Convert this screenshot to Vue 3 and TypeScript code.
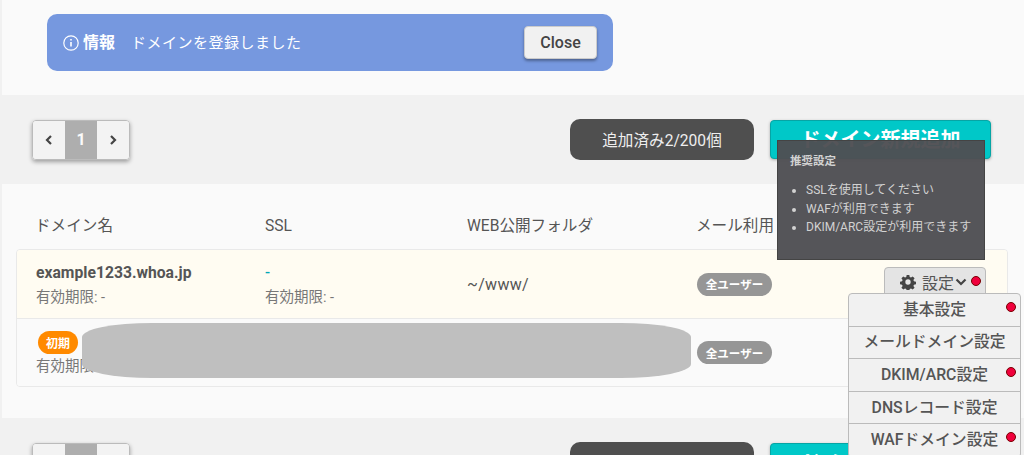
<script setup lang="ts">
interface Row {
  name?: string
  badge?: string
  sslMark?: string
  expiry: string
  sslExpiry?: string
  folder?: string
  highlight: boolean
}

const rows: Row[] = [
  { name: 'example1233.whoa.jp', sslMark: '-', expiry: '有効期限: -', sslExpiry: '有効期限: -', folder: '~/www/', highlight: true },
  { badge: '初期', expiry: '有効期限: -', highlight: false },
]

const menu = [
  { label: '基本設定', dot: true },
  { label: 'メールドメイン設定', dot: false },
  { label: 'DKIM/ARC設定', dot: true },
  { label: 'DNSレコード設定', dot: false },
  { label: 'WAFドメイン設定', dot: true },
]

const tips = ['SSLを使用してください', 'WAFが利用できます', 'DKIM/ARC設定が利用できます']
</script>

<template>
  <div class="page">
    <section class="panel top">
      <div class="alert">
        <svg class="info" width="18" height="18" viewBox="0 0 18 18" fill="none" stroke="#fff">
          <circle cx="9" cy="9" r="7.2" stroke-width="1.2" />
          <path d="M9 8v4.6" stroke-width="1.6" />
          <path d="M9 5v1.6" stroke-width="1.6" />
        </svg>
        <strong>情報</strong>
        <span class="alert-msg">ドメインを登録しました</span>
        <button class="close">Close</button>
      </div>
    </section>

    <section class="bar">
      <div class="pager">
        <span class="pg">
          <svg width="8" height="10" viewBox="0 0 8 10" fill="none" stroke="#444" stroke-width="2.2"><path d="M6 1 2 5l4 4" /></svg>
        </span>
        <span class="pg cur">1</span>
        <span class="pg">
          <svg width="8" height="10" viewBox="0 0 8 10" fill="none" stroke="#444" stroke-width="2.2"><path d="m2 1 4 4-4 4" /></svg>
        </span>
      </div>
      <div class="count">追加済み2/200個</div>
      <div class="add-wrap">
        <button class="add">ドメイン新規追加</button>
        <div class="tooltip">
          <p class="tip-title">推奨設定</p>
          <ul>
            <li v-for="t in tips" :key="t">{{ t }}</li>
          </ul>
        </div>
      </div>
    </section>

    <section class="panel list">
      <div class="grid head">
        <span>ドメイン名</span>
        <span>SSL</span>
        <span>WEB公開フォルダ</span>
        <span>メール利用</span>
      </div>
      <div class="card">
        <div v-for="(r, i) in rows" :key="i" class="grid row" :class="{ hl: r.highlight }">
          <div>
            <div v-if="r.name" class="name">{{ r.name }}</div>
            <span v-if="r.badge" class="badge-orange">{{ r.badge }}</span>
            <div class="sub">{{ r.expiry }}</div>
          </div>
          <div>
            <div class="mark">{{ r.sslMark }}</div>
            <div class="sub">{{ r.sslExpiry }}</div>
          </div>
          <div class="folder">{{ r.folder }}</div>
          <div class="mail">
            <span class="pill">全ユーザー</span>
            <div v-if="r.highlight" class="settings">
              <svg width="16" height="16" viewBox="0 0 24 24" fill="#444">
                <path fill-rule="evenodd" d="M10 1.5h4l.6 3.1 1.9.8 2.6-1.8 2.8 2.8-1.8 2.6.8 1.9 3.1.6v4l-3.1.6-.8 1.9 1.8 2.6-2.8 2.8-2.6-1.8-1.9.8-.6 3.1h-4l-.6-3.1-1.9-.8-2.6 1.8-2.8-2.8 1.8-2.6-.8-1.9-3.1-.6v-4l3.1-.6.8-1.9-1.8-2.6 2.8-2.8 2.6 1.8 1.9-.8zM12 8a4 4 0 1 0 0 8 4 4 0 0 0 0-8z" />
              </svg>
              <span class="settings-label">設定</span>
              <svg width="12" height="8" viewBox="0 0 12 8" fill="none" stroke="#444" stroke-width="2.2"><path d="m1.5 1.5 4.5 4.5 4.500-4.500" /></svg>
              <i class="dot settings-dot"></i>
            </div>
          </div>
        </div>
        <div class="redact"></div>
      </div>
    </section>

    <section class="bar bottom">
      <div class="pager">
        <span class="pg"></span>
        <span class="pg cur"></span>
        <span class="pg"></span>
      </div>
      <div class="count"></div>
      <div class="add-wrap"><button class="add">ドメイン新規追加</button></div>
    </section>

    <div class="menu">
      <div v-for="m in menu" :key="m.label" class="menu-item">
        {{ m.label }}
        <i v-if="m.dot" class="dot menu-dot"></i>
      </div>
    </div>
  </div>
</template>

<style>
html, body {
  margin: 0;
  overflow: hidden;
  background: #f1f1f1;
}
</style>

<style scoped>
* {
  box-sizing: border-box;
}
.page {
  position: relative;
  width: 1024px;
  height: 455px;
  overflow: hidden;
  color: #555;
  font-family: Roboto, "Noto Sans CJK JP", sans-serif;
  background: #f1f1f1;
}
.panel {
  margin-left: 2px;
  background: #fafafa;
}
.top {
  height: 95px;
  padding: 14px 0 0 45px;
}
.alert {
  display: flex;
  align-items: center;
  width: 566px;
  height: 57px;
  padding: 0 16px 0 15px;
  border-radius: 10px;
  color: #fff;
  font-size: 15px;
  background: #7698df;
}
.info {
  margin-right: 3px;
}
.alert strong {
  margin-bottom: 3px;
  font-size: 16px;
  font-weight: 700;
}
.alert-msg {
  margin: 0 0 3px 16px;
  letter-spacing: 0.5px;
}
.close {
  width: 73px;
  height: 33px;
  margin-left: auto;
  border: 1px solid #ccc;
  border-radius: 4px;
  color: #444;
  font: 500 16px Roboto, sans-serif;
  background: #f1f1f1;
  box-shadow: 0 2px 3px rgba(0, 0, 0, 0.35);
}
.bar {
  display: flex;
  align-items: center;
  height: 89px;
  padding: 0 33px 0 32px;
}
.pager {
  display: flex;
  height: 40px;
  margin-right: auto;
  overflow: hidden;
  border: 1px solid #bbb;
  border-radius: 4px;
  box-shadow: 0 2px 4px rgba(0, 0, 0, 0.35);
}
.pg {
  display: flex;
  align-items: center;
  justify-content: center;
  width: 32px;
  background: #f3f3f3;
}
.cur {
  color: #fafafa;
  font-size: 16px;
  font-weight: 700;
  background: #aeaeae;
}
.count {
  display: flex;
  align-items: center;
  justify-content: center;
  width: 184px;
  height: 41px;
  padding-bottom: 1px;
  border-radius: 10px;
  color: #eee;
  font-size: 15.6px;
  background: #4f4f4f;
}
.add-wrap {
  position: relative;
  margin-left: 16px;
}
.add {
  display: block;
  width: 221px;
  height: 39px;
  padding-bottom: 4px;
  border: 1px solid #06a5a5;
  border-radius: 4px;
  color: #fff;
  font: 700 20px Roboto, "Noto Sans CJK JP", sans-serif;
  background: #00c8c8;
  box-shadow: 0 1px 3px rgba(0, 0, 0, 0.3);
}
.tooltip {
  position: absolute;
  top: 20px;
  left: 7px;
  z-index: 3;
  width: 208px;
  height: 120px;
  padding: 11px 12px 0;
  border: 1px solid #444;
  color: #d2d2d2;
  font-size: 12px;
  background: rgba(78, 78, 82, 0.96);
}
.tip-title {
  margin: 0 0 13px;
  font-size: 11.5px;
  font-weight: 700;
}
.tooltip ul {
  margin: 0;
  padding-left: 16px;
  line-height: 18.5px;
}
.list {
  position: relative;
  height: 234px;
  padding: 0 16px 0 14px;
}
.grid {
  display: grid;
  grid-template-columns: 229px 202px 230px 1fr;
  padding-left: 19px;
}
.head {
  grid-template-columns: 230px 202px 229px 1fr;
  align-items: center;
  height: 65px;
  padding-top: 19px;
  font-size: 15.6px;
  line-height: 22px;
}
.card {
  position: relative;
  overflow: hidden;
  border: 1px solid #e9e9e9;
  border-radius: 4px;
}
.row {
  align-items: center;
  height: 68px;
  background: #fafafa;
}
.row + .row {
  border-top: 1px solid #e9e9e9;
}
.hl {
  background: #fffcf2;
}
.name {
  margin-bottom: 3px;
  font-size: 15.7px;
  font-weight: 700;
}
.sub {
  min-height: 16px;
  color: #777;
  font-size: 14.5px;
}
.mark {
  min-height: 17px;
  margin-bottom: 4px;
  color: #00a8b8;
  font-size: 15px;
  font-weight: 500;
}
.folder {
  font-size: 16px;
  letter-spacing: 0.3px;
}
.mail {
  display: flex;
  align-items: center;
  position: relative;
}
.pill {
  display: flex;
  align-items: center;
  justify-content: center;
  width: 75px;
  height: 23px;
  border-radius: 12px;
  color: #fff;
  font-size: 11.5px;
  font-weight: 700;
  background: #969696;
}
.badge-orange {
  display: flex;
  align-items: center;
  justify-content: center;
  width: 40px;
  height: 23px;
  margin-left: 2px;
  border-radius: 12px;
  color: #fff;
  font-size: 12px;
  font-weight: 700;
  background: #ff8a00;
}
.settings {
  position: absolute;
  top: -6px;
  left: 187px;
  display: flex;
  align-items: center;
  gap: 6px;
  width: 102px;
  height: 34px;
  padding: 0 0 3px 15px;
  border: 1px solid #bbb;
  border-radius: 4px;
  background: #e4e4e4;
}
.settings-label {
  margin-right: -5px;
  font-size: 16px;
}
.dot {
  position: absolute;
  width: 10px;
  height: 10px;
  border: 1px solid #700;
  border-radius: 50%;
  background: #f0003c;
}
.settings-dot {
  top: 8px;
  right: 4px;
}
/* grey blot hiding the second row's real domain */
.redact {
  position: absolute;
  top: 73px;
  left: 65px;
  width: 609px;
  height: 55px;
  border-radius: 70px / 14px;
  background: #bfbfbf;
}
.menu {
  position: absolute;
  top: 293px;
  left: 848px;
  z-index: 4;
  width: 173px;
  overflow: hidden;
  border: 1px solid #bbb;
  border-radius: 4px;
  background: #f1f1f1;
}
.menu-item {
  position: relative;
  display: flex;
  align-items: center;
  justify-content: center;
  height: 32.6px;
  padding-bottom: 3px;
  font-size: 15.8px;
  font-weight: 500;
  border-bottom: 1px solid #bbb;
}
.menu-dot {
  top: 8px;
  right: 4px;
}
</style>
